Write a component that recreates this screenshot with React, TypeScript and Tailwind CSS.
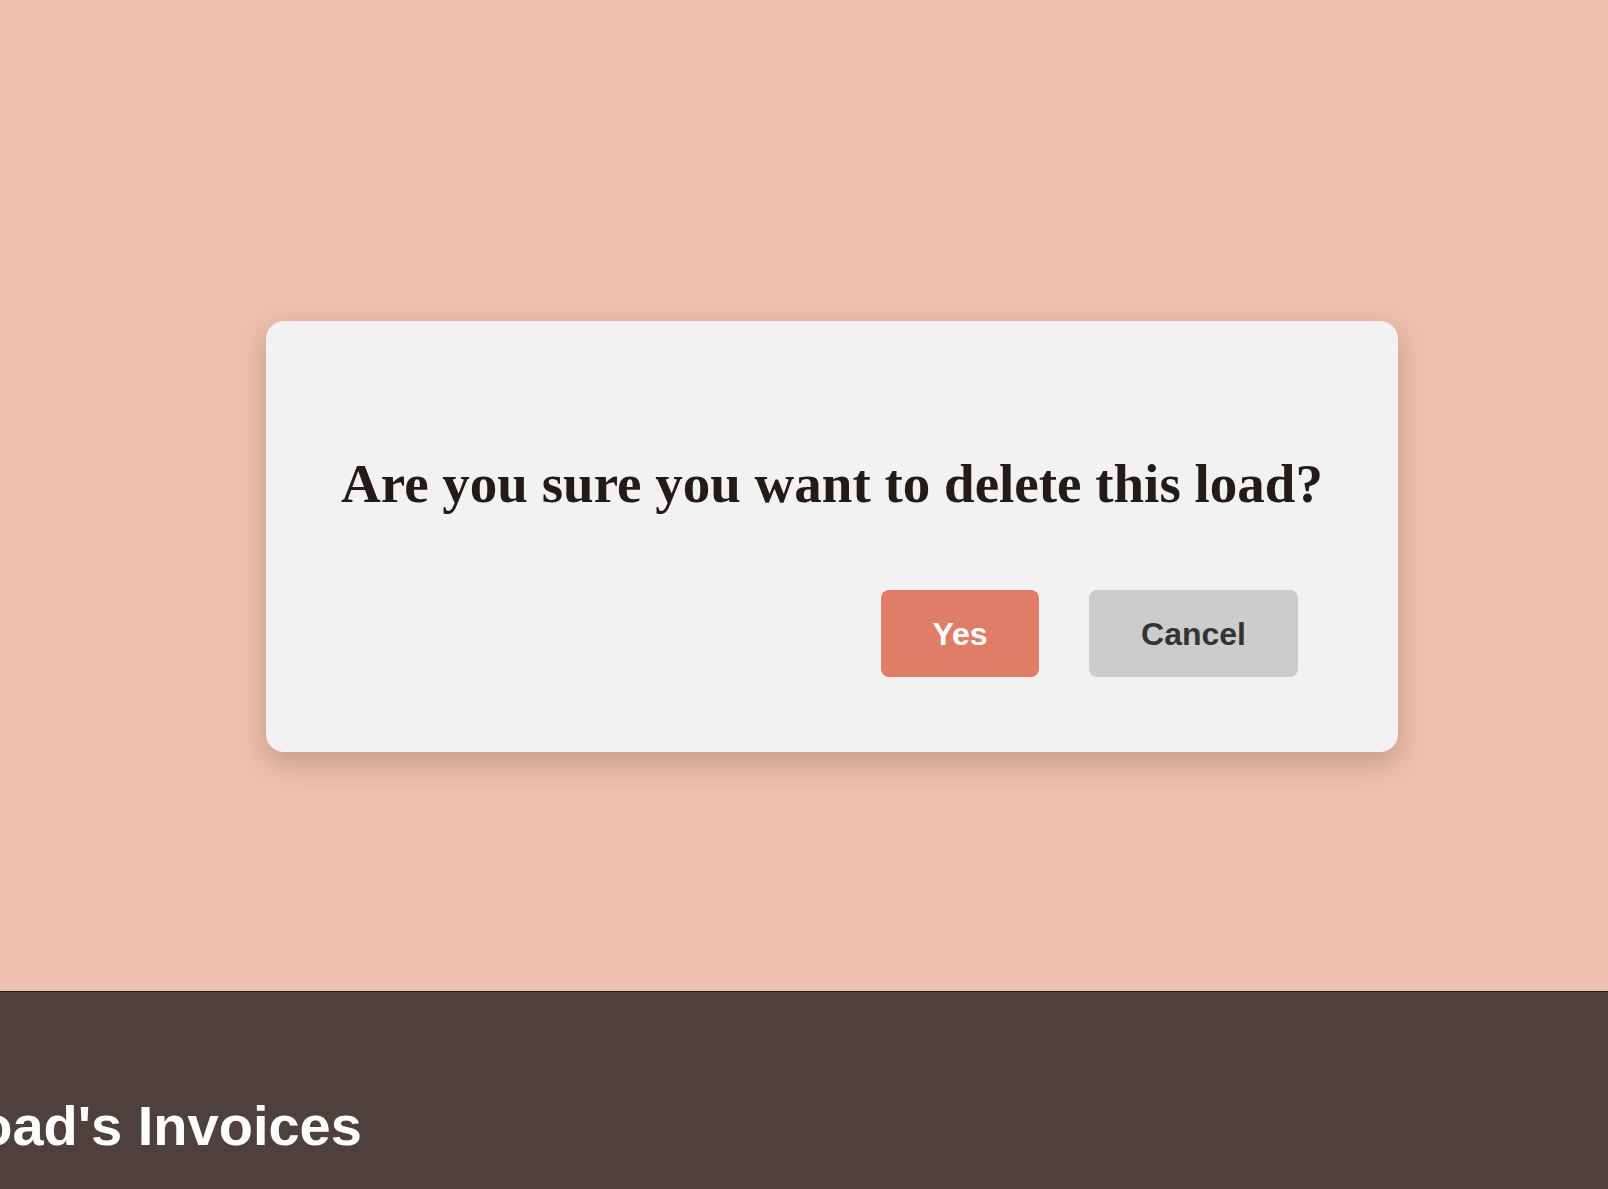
export default function App() {
  return (
    <div className="flex flex-col w-full h-[1189px] overflow-hidden bg-[#eec1ae]">
      {/* Confirm dialog */}
      <div className="h-[991px] flex-shrink-0">
        <div className="ml-[266px] mt-[321px] w-[1132px] h-[431px] rounded-[18px] bg-[#f2f2f2] shadow-[0_10px_30px_rgba(60,30,20,0.25)] flex flex-col">
          <h2 className="pt-[131px] text-center font-['Liberation_Serif',serif] font-bold text-[55px] leading-[63px] text-[#231b17]">
            Are you sure you want to delete this load?
          </h2>
          <div className="flex justify-end gap-[50px] pr-[100px] mt-[75px]">
            <button className="w-[158px] h-[87px] rounded-lg bg-[#e07d67] text-white font-['Liberation_Sans',Arial,sans-serif] font-bold text-[32px]">
              Yes
            </button>
            <button className="w-[209px] h-[87px] rounded-lg bg-[#cccccc] text-[#333333] font-['Liberation_Sans',Arial,sans-serif] font-bold text-[32px]">
              Cancel
            </button>
          </div>
        </div>
      </div>

      {/* Footer section */}
      <div className="flex-1 border-t border-[#231a17] bg-[#4e413d] overflow-hidden">
        <h1 className="pt-[92px] ml-[-56px] whitespace-nowrap font-['Liberation_Sans',Arial,sans-serif] font-bold text-[56px] text-white">
          Load's Invoices
        </h1>
      </div>
    </div>
  );
}
